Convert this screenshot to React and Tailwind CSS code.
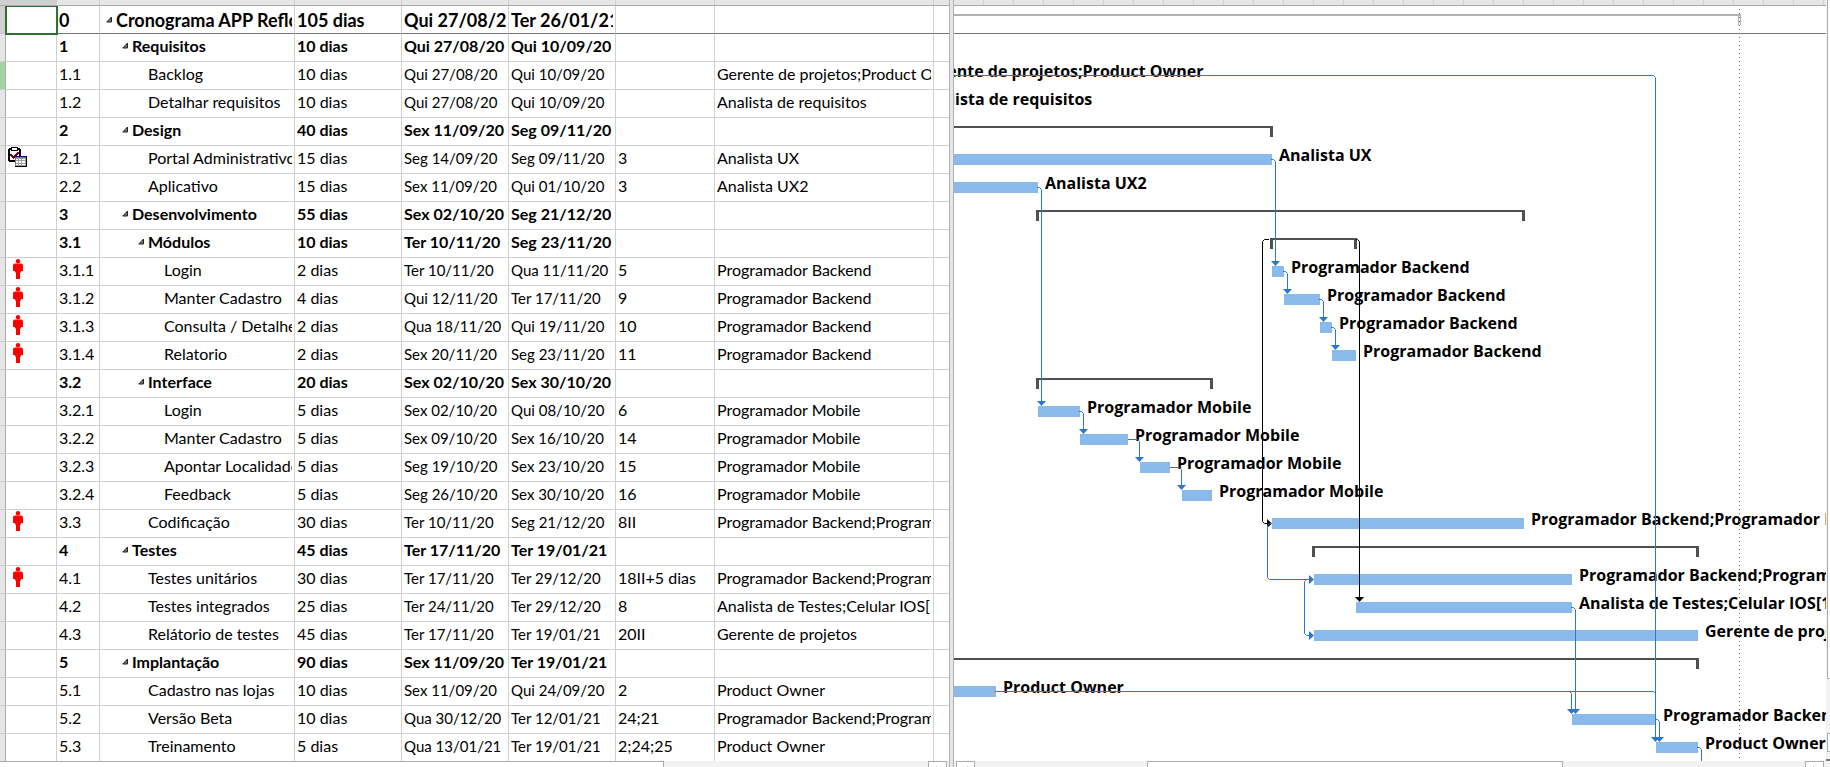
const TASKS = [
  { id: '0', lvl: 0, name: 'Cronograma APP Reflorestar', dur: '105 dias', start: 'Qui 27/08/20', end: 'Ter 26/01/21', sum: 'root', bar: [800, 1741] },
  { id: '1', lvl: 1, name: 'Requisitos', dur: '10 dias', start: 'Qui 27/08/20', end: 'Qui 10/09/20', sum: true },
  { id: '1.1', lvl: 2, name: 'Backlog', dur: '10 dias', start: 'Qui 27/08/20', end: 'Qui 10/09/20', res: 'Gerente de projetos;Product Owner', bar: [828, 912], mark: true },
  { id: '1.2', lvl: 2, name: 'Detalhar requisitos', dur: '10 dias', start: 'Qui 27/08/20', end: 'Qui 10/09/20', res: 'Analista de requisitos', bar: [828, 912] },
  { id: '2', lvl: 1, name: 'Design', dur: '40 dias', start: 'Sex 11/09/20', end: 'Seg 09/11/20', sum: true, bar: [910, 1273] },
  { id: '2.1', lvl: 2, name: 'Portal Administrativo', dur: '15 dias', start: 'Seg 14/09/20', end: 'Seg 09/11/20', pred: '3', res: 'Analista UX', bar: [930, 1272], icon: 'calendar' },
  { id: '2.2', lvl: 2, name: 'Aplicativo', dur: '15 dias', start: 'Sex 11/09/20', end: 'Qui 01/10/20', pred: '3', res: 'Analista UX2', bar: [912, 1038] },
  { id: '3', lvl: 1, name: 'Desenvolvimento', dur: '55 dias', start: 'Sex 02/10/20', end: 'Seg 21/12/20', sum: true, bar: [1036, 1525] },
  { id: '3.1', lvl: 2, name: 'Módulos', dur: '10 dias', start: 'Ter 10/11/20', end: 'Seg 23/11/20', sum: true, bar: [1270, 1357] },
  { id: '3.1.1', lvl: 3, name: 'Login', dur: '2 dias', start: 'Ter 10/11/20', end: 'Qua 11/11/20', pred: '5', res: 'Programador Backend', bar: [1272, 1284], icon: 'person' },
  { id: '3.1.2', lvl: 3, name: 'Manter Cadastro', dur: '4 dias', start: 'Qui 12/11/20', end: 'Ter 17/11/20', pred: '9', res: 'Programador Backend', bar: [1284, 1320], icon: 'person' },
  { id: '3.1.3', lvl: 3, name: 'Consulta / Detalhe', dur: '2 dias', start: 'Qua 18/11/20', end: 'Qui 19/11/20', pred: '10', res: 'Programador Backend', bar: [1320, 1332], icon: 'person' },
  { id: '3.1.4', lvl: 3, name: 'Relatorio', dur: '2 dias', start: 'Sex 20/11/20', end: 'Seg 23/11/20', pred: '11', res: 'Programador Backend', bar: [1332, 1356], icon: 'person' },
  { id: '3.2', lvl: 2, name: 'Interface', dur: '20 dias', start: 'Sex 02/10/20', end: 'Sex 30/10/20', sum: true, bar: [1036, 1213] },
  { id: '3.2.1', lvl: 3, name: 'Login', dur: '5 dias', start: 'Sex 02/10/20', end: 'Qui 08/10/20', pred: '6', res: 'Programador Mobile', bar: [1038, 1080] },
  { id: '3.2.2', lvl: 3, name: 'Manter Cadastro', dur: '5 dias', start: 'Sex 09/10/20', end: 'Sex 16/10/20', pred: '14', res: 'Programador Mobile', bar: [1080, 1128] },
  { id: '3.2.3', lvl: 3, name: 'Apontar Localidade', dur: '5 dias', start: 'Seg 19/10/20', end: 'Sex 23/10/20', pred: '15', res: 'Programador Mobile', bar: [1140, 1170] },
  { id: '3.2.4', lvl: 3, name: 'Feedback', dur: '5 dias', start: 'Seg 26/10/20', end: 'Sex 30/10/20', pred: '16', res: 'Programador Mobile', bar: [1182, 1212] },
  { id: '3.3', lvl: 2, name: 'Codificação', dur: '30 dias', start: 'Ter 10/11/20', end: 'Seg 21/12/20', pred: '8II', res: 'Programador Backend;Programador Mobile', bar: [1272, 1524], icon: 'person' },
  { id: '4', lvl: 1, name: 'Testes', dur: '45 dias', start: 'Ter 17/11/20', end: 'Ter 19/01/21', sum: true, bar: [1312, 1699] },
  { id: '4.1', lvl: 2, name: 'Testes unitários', dur: '30 dias', start: 'Ter 17/11/20', end: 'Ter 29/12/20', pred: '18II+5 dias', res: 'Programador Backend;Programador Mobile', bar: [1314, 1572], icon: 'person' },
  { id: '4.2', lvl: 2, name: 'Testes integrados', dur: '25 dias', start: 'Ter 24/11/20', end: 'Ter 29/12/20', pred: '8', res: 'Analista de Testes;Celular IOS[1]', bar: [1356, 1572] },
  { id: '4.3', lvl: 2, name: 'Relátorio de testes', dur: '45 dias', start: 'Ter 17/11/20', end: 'Ter 19/01/21', pred: '20II', res: 'Gerente de projetos', bar: [1314, 1698] },
  { id: '5', lvl: 1, name: 'Implantação', dur: '90 dias', start: 'Sex 11/09/20', end: 'Ter 19/01/21', sum: true, bar: [910, 1699] },
  { id: '5.1', lvl: 2, name: 'Cadastro nas lojas', dur: '10 dias', start: 'Sex 11/09/20', end: 'Qui 24/09/20', pred: '2', res: 'Product Owner', bar: [912, 996] },
  { id: '5.2', lvl: 2, name: 'Versão Beta', dur: '10 dias', start: 'Qua 30/12/20', end: 'Ter 12/01/21', pred: '24;21', res: 'Programador Backend;Programador Mobile', bar: [1572, 1656] },
  { id: '5.3', lvl: 2, name: 'Treinamento', dur: '5 dias', start: 'Qua 13/01/21', end: 'Ter 19/01/21', pred: '2;24;25', res: 'Product Owner', bar: [1656, 1698] },
];

const ROW = 28;
const ORIGIN = 954;
const INDENT = ['pl-1', 'pl-5', 'pl-9', 'pl-13'];

// Row centre line of a bar and the top edge of a bar, in chart units.
const mid = (i) => i * ROW + 13.5;
const top = (i) => i * ROW + 8;

const LINKS = [
  { d: `M900 69.5H1653.5L1655.5 71.5V${top(26) - 4}`, tip: [1655.5, top(26)] },
  { d: `M1271 ${mid(5)}H1273.5L1275.5 ${mid(5) + 2}V${top(9) - 4}`, tip: [1275.5, top(9)] },
  { d: `M1037 ${mid(6)}H1039.5L1041.5 ${mid(6) + 2}V${top(14) - 4}`, tip: [1041.5, top(14)] },
  { d: `M1283 ${mid(9)}H1285.5L1287.5 ${mid(9) + 2}V${top(10) - 4}`, tip: [1287.5, top(10)] },
  { d: `M1319 ${mid(10)}H1321.5L1323.5 ${mid(10) + 2}V${top(11) - 4}`, tip: [1323.5, top(11)] },
  { d: `M1331 ${mid(11)}H1333.5L1335.5 ${mid(11) + 2}V${top(12) - 4}`, tip: [1335.5, top(12)] },
  { d: `M1079 ${mid(14)}H1081.5L1083.5 ${mid(14) + 2}V${top(15) - 4}`, tip: [1083.5, top(15)] },
  { d: `M1128 ${mid(15)}H1137.5L1139.5 ${mid(15) + 2}V${top(16) - 4}`, tip: [1139.5, top(16)] },
  { d: `M1170 ${mid(16)}H1179.5L1181.5 ${mid(16) + 2}V${top(17) - 4}`, tip: [1181.5, top(17)] },
  { d: `M1269 ${mid(8) - 4}H1264.5L1262.5 ${mid(8) - 2}V${mid(18) - 2}L1264.5 ${mid(18)}H1268`, tip: [1272, mid(18)], side: true, black: true },
  { d: `M1356 ${mid(8) - 4}H1357.5L1359.5 ${mid(8) - 2}V${top(21) - 4}`, tip: [1359.5, top(21)], black: true },
  { d: `M1272 ${mid(18)}H1269.5L1267.5 ${mid(18) + 2}V${mid(20) - 2}L1269.5 ${mid(20)}H1310`, tip: [1314, mid(20)], side: true },
  { d: `M1308 ${mid(20)}H1306.5L1304.5 ${mid(20) + 2}V${mid(22) - 2}L1306.5 ${mid(22)}H1310`, tip: [1314, mid(22)], side: true },
  { d: `M1571 ${mid(21)}H1573.5L1575.5 ${mid(21) + 2}V${top(25) - 4}`, tip: [1575.5, top(25)] },
  { d: `M995 ${mid(24)}H1569.5L1571.5 ${mid(24) + 2}V${top(25) - 4}`, tip: [1571.5, top(25)] },
  { d: `M1569 ${mid(24)}H1653.5L1655.5 ${mid(24) + 2}` },
  { d: `M1655 ${mid(25)}H1657.5L1659.5 ${mid(25) + 2}V${top(26) - 4}`, tip: [1659.5, top(26)] },
  { d: `M1697 ${mid(26)}H1699.5L1701.5 ${mid(26) + 2}V800` },
];

function PersonIcon() {
  return (
    <svg viewBox="0 0 10 20" className="ml-[7px] h-5 w-[10px] fill-[#ff0000]" aria-label="Recurso superalocado">
      <circle cx="5" cy="2.2" r="2.2" />
      <path d="M2 4.5h6a2 2 0 0 1 2 2V12H8v1.5H7V20H3v-6.500H2V12H0V6.500a2 2 0 0 1 2-2z" />
    </svg>
  );
}

function CalendarIcon() {
  return (
    <svg viewBox="0 0 20 20" className="ml-px h-5 w-5" shapeRendering="crispEdges" aria-label="Calendário da tarefa">
      <path d="M2 1h11v1h1v7H8v6H2v-1H1V2h1z" fill="#000" />
      <path d="M3 3h9v6H8v4H3z" fill="#fff" />
      <path d="M4 0h7v4H4z" fill="#000" />
      <path d="M5 1h5v2H5z" fill="#fff" />
      <path d="M3.500 7.500l3 3 5-5" fill="none" stroke="#800000" strokeWidth="1.500" />
      <path d="M8 9h12v11H8z" fill="#808080" />
      <path d="M8 9h12v1H8z" fill="#000080" />
      <path d="M9 11h10v8H9z" fill="#a0a0a0" />
      <path d="M9 12h2v1H9zM12 12h2v1h-2zM15 12h3v1h-3zM9 14h2v2H9zM12 14h2v2h-2zM15 14h3v2h-3zM9 17h2v1H9zM12 17h2v1h-2zM15 17h3v1h-3z" fill="#fff" />
      <path d="M19 10h1v10H8v-1h11z" fill="#000" />
    </svg>
  );
}

function Collapse() {
  return (
    <button type="button" aria-label="Recolher" className="block h-4 w-[10px] shrink-0">
      <svg viewBox="0 0 10 16" className="h-4 w-[10px]">
        <path d="M5.500 5V10H0.800z" fill="#777" stroke="#222" />
      </svg>
    </button>
  );
}

function Cell({ children, className = '' }) {
  return (
    <td className={`border-r border-[#d0d0d0] px-[2px] pt-0 ${className}`}>
      <div className="overflow-hidden whitespace-nowrap">{children}</div>
    </td>
  );
}

function TaskTable() {
  return (
    <table className="w-full table-fixed border-separate border-spacing-0 font-['Lato','Liberation_Sans',sans-serif] text-black">
      <colgroup>
        <col className="w-[6px]" />
        <col className="w-[51px]" />
        <col className="w-[43px]" />
        <col className="w-[195px]" />
        <col className="w-[107px]" />
        <col className="w-[107px]" />
        <col className="w-[107px]" />
        <col className="w-[99px]" />
        <col className="w-[219px]" />
        <col />
      </colgroup>
      <tbody>
        {TASKS.map((t) => {
          const root = t.sum === 'root';
          const line = root ? 'border-b border-b-[#777] pb-0' : 'border-b border-b-[#d0d0d0] pb-1';
          const date = t.sum ? line : `${line} text-[15px]`;
          return (
            <tr key={t.id} className={`h-7 ${t.sum ? 'font-bold' : ''} ${root ? 'text-[18px] leading-5' : 'text-[16px] leading-5'}`}>
              <td className={`border-r border-r-[#ababab] border-b border-b-[#d0d0d0] p-0 ${root ? 'bg-[#d0d0d0]' : t.mark ? 'bg-[#9fd5a0]' : 'bg-[#e6e6e6]'}`} />
              <td className={`border-r border-r-[#d0d0d0] p-0 pt-px align-top border-b ${root ? 'border-b-[#777] outline-2 -outline-offset-1 outline-[#2f6f2f]' : 'border-b-[#d0d0d0]'}`}>
                {t.icon === 'person' && <PersonIcon />}
                {t.icon === 'calendar' && <CalendarIcon />}
              </td>
              <Cell className={line}>{t.id}</Cell>
              <Cell className={line}>
                <div className={`flex items-center ${INDENT[t.lvl]}`}>
                  {t.sum ? <Collapse /> : null}
                  <span className={t.sum ? '' : 'pl-[10px]'}>{t.name}</span>
                </div>
              </Cell>
              <Cell className={line}>{t.dur}</Cell>
              <Cell className={date}>{t.start}</Cell>
              <Cell className={date}>{t.end}</Cell>
              <Cell className={line}>{t.pred}</Cell>
              <Cell className={line}>{t.res}</Cell>
              <td className={`p-0 ${line}`} />
            </tr>
          );
        })}
      </tbody>
    </table>
  );
}

function Bar({ task, index }) {
  const [a, b] = task.bar;
  const y = top(index);
  if (task.sum === 'root') {
    return (
      <g className="fill-[#b1b1b1]">
        <rect x={a} y={y} width={b - a} height="2" />
        <rect x={b - 3} y={y} width="1" height="11" />
        <rect x={b - 1} y={y} width="1" height="11" />
      </g>
    );
  }
  if (task.sum) {
    return (
      <g className="fill-[#505050]">
        <rect x={a} y={y} width={b - a} height="2" />
        <rect x={a} y={y} width="3" height="11" />
        <rect x={b - 3} y={y} width="3" height="11" />
      </g>
    );
  }
  return (
    <>
      <rect x={a} y={y} width={b - a} height="11" className="fill-[#8ab9eb]" />
      <text x={b + 7} y={y + 7} className="fill-black text-[16px] font-bold">{task.res}</text>
    </>
  );
}

function Link({ link }) {
  const color = link.black ? '#000' : '#2878d0';
  const [x, y] = link.tip || [];
  return (
    <g>
      <path d={link.d} fill="none" stroke={color} />
      {link.tip && (
        <path
          fill={color}
          d={link.side ? `M${x} ${y}l-5 -4.500v9z` : `M${x} ${y}l-4.500 -5h9z`}
        />
      )}
    </g>
  );
}

function Chart() {
  return (
    <svg className="block h-full w-full font-['Open_Sans','Noto_Sans',sans-serif]" role="img" aria-label="Gráfico de Gantt">
      <g transform={`translate(${-ORIGIN} 0)`}>
        <path d="M900 27.500H4000" stroke="#777" />
        {TASKS.map((t, i) => (t.bar ? <Bar key={t.id} task={t} index={i} /> : null))}
        <path d="M1739.500 3V800" stroke="#777" strokeDasharray="1 3" />
        {LINKS.map((l) => <Link key={l.d} link={l} />)}
      </g>
    </svg>
  );
}

function ScrollButton({ label, dir }) {
  return (
    <button type="button" aria-label={label} className="flex h-[18px] w-[19px] shrink-0 justify-center border border-[#ababab] bg-white pt-1">
      <svg viewBox="0 0 8 8" className="h-2 w-2 fill-[#777]">
        <path d={dir === 'left' ? 'M6 0v8L2 4z' : 'M2 0v8l4-4z'} />
      </svg>
    </button>
  );
}

export default function App() {
  return (
    <main className="flex h-screen overflow-hidden bg-white">
      <section className="flex w-[949px] shrink-0 flex-col">
        <div className="flex h-[6px] shrink-0 border-b border-[#ababab] bg-[#e6e6e6]">
          <div className="w-[57px] border-r border-[#d0d0d0] bg-[#d0d0d0]" />
          <div className="w-[43px] border-r border-[#d0d0d0]" />
          <div className="w-[195px] border-r border-[#d0d0d0]" />
          <div className="w-[107px] border-r border-[#d0d0d0]" />
          <div className="w-[107px] border-r border-[#d0d0d0]" />
          <div className="w-[107px] border-r border-[#d0d0d0]" />
          <div className="w-[99px] border-r border-[#d0d0d0]" />
          <div className="w-[219px] border-r border-[#d0d0d0]" />
        </div>
        <div className="min-h-0 flex-1 overflow-hidden">
          <TaskTable />
        </div>
        <div className="flex h-[6px] shrink-0 overflow-hidden bg-[#f2f2f2]">
          <div className="h-[18px] w-[664px] border-t border-r border-[#ababab] bg-white" />
          <div className="flex-1" />
          <ScrollButton label="Rolar tabela para a direita" dir="right" />
          <div className="w-[2px]" />
        </div>
      </section>
      <div className="w-[5px] shrink-0 border-x border-[#b0b0b0] bg-[#e6e6e6]" />
      <section className="flex min-w-0 flex-1 flex-col">
        <div className="flex h-[6px] shrink-0 overflow-hidden border-b border-[#ababab] bg-[#e6e6e6]">
          {Array.from({ length: 40 }, (_, i) => (
            <div key={i} className="w-[30px] shrink-0 border-r border-[#d0d0d0]" />
          ))}
        </div>
        <div className="min-h-0 flex-1 overflow-hidden">
          <Chart />
        </div>
        <div className="flex h-[6px] shrink-0 overflow-hidden bg-[#f2f2f2] px-[2px]">
          <ScrollButton label="Rolar gráfico para a esquerda" dir="left" />
          <div className="w-[172px]" />
          <div className="h-[18px] w-[416px] border border-[#ababab] bg-white" />
          <div className="flex-1" />
          <ScrollButton label="Rolar gráfico para a direita" dir="right" />
        </div>
      </section>
      <div className="flex w-1 shrink-0 flex-col bg-[#f2f2f2]">
        <div className="ml-px h-[679px] border-b border-l border-[#ababab] bg-white" />
        <div className="flex-1" />
        <div className="ml-px h-[19px] border-y border-l border-[#ababab] bg-white" />
        <div className="mb-[6px] mt-[2px] h-[7px] border-b-2 border-[#777]" />
      </div>
    </main>
  );
}
